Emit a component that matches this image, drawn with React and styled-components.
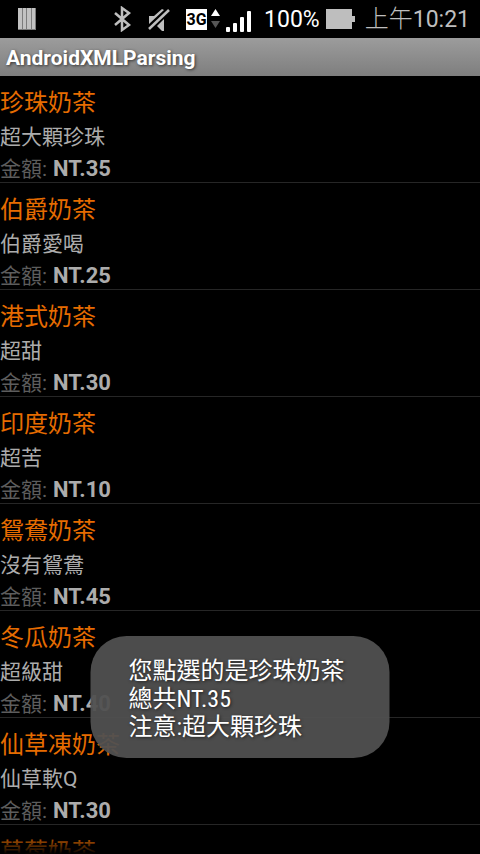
import React from "react";
import styled, { createGlobalStyle } from "styled-components";

const drinks = [
  { name: "珍珠奶茶", note: "超大顆珍珠", price: 35 },
  { name: "伯爵奶茶", note: "伯爵愛喝", price: 25 },
  { name: "港式奶茶", note: "超甜", price: 30 },
  { name: "印度奶茶", note: "超苦", price: 10 },
  { name: "鴛鴦奶茶", note: "沒有鴛鴦", price: 45 },
  { name: "冬瓜奶茶", note: "超級甜", price: 40 },
  { name: "仙草凍奶茶", note: "仙草軟Q", price: 30 },
  { name: "草莓奶茶" },
];

function StatusBar() {
  return (
    <Status>
      <svg width="18" height="22" viewBox="0 0 18 22">
        <rect width="18" height="22" fill="#7c7c7c" />
        <path d="M0 0h4v21H0zM5 0h3v21H5zM9 0h4v21H9zM14 0h3v21h-3z" fill="#c2c2c2" />
      </svg>
      <StatusIcons>
        <svg width="18" height="26" viewBox="0 0 18 26" aria-label="Bluetooth">
          <path
            d="M1 7l14 12-7 5V2l7 5L1 19"
            fill="none"
            stroke="#bebebe"
            strokeWidth="2.5"
          />
        </svg>
        <Mute width="22" height="24" viewBox="0 0 22 24" aria-label="Muted">
          <path d="M1 9h5l8-7 2 1L1 17z" fill="#bebebe" />
          <path d="M16 12v12h-2l-5-5z" fill="#bebebe" />
          <path d="M1 22L21 3" stroke="#000" strokeWidth="5" />
          <path d="M1 22L21 3" stroke="#bebebe" strokeWidth="2.5" />
        </Mute>
        <Network>3G</Network>
        <Arrows width="9" height="20" viewBox="0 0 9 20">
          <path d="M4.5 0L9 7H0z" fill="#fff" />
          <path d="M4.5 19L9 12H0z" fill="#555" />
        </Arrows>
        <Signal width="26" height="24" viewBox="0 0 26 24" aria-label="Signal">
          <rect y="17" width="4" height="5" rx="1" fill="#fff" />
          <rect x="7" y="13" width="4" height="9" rx="1" fill="#fff" />
          <rect x="14" y="7" width="4" height="15" rx="1" fill="#fff" />
          <rect x="21" y="1" width="4" height="21" rx="1" fill="#fff" />
        </Signal>
        <Percent>100%</Percent>
        <svg width="29" height="20" viewBox="0 0 29 20" aria-label="Battery">
          <path d="M0 0h26v7h3v6h-3v7H0z" fill="#bebebe" />
        </svg>
        <Clock>
          上午<span>10:21</span>
        </Clock>
      </StatusIcons>
    </Status>
  );
}

function App() {
  return (
    <Screen>
      <GlobalStyle />
      <StatusBar />
      <TitleBar>AndroidXMLParsing</TitleBar>
      <List>
        {drinks.map((drink) => (
          <Item key={drink.name}>
            <h2>{drink.name}</h2>
            {drink.note && <p className="note">{drink.note}</p>}
            {drink.price && (
              <p className="price">
                <span>金額:</span>
                <strong>NT.{drink.price}</strong>
              </p>
            )}
          </Item>
        ))}
      </List>
      <Toast role="status">
        <p>您點選的是珍珠奶茶</p>
        <p>總共NT.35</p>
        <p>注意:超大顆珍珠</p>
      </Toast>
    </Screen>
  );
}

const GlobalStyle = createGlobalStyle`
  * {
    box-sizing: border-box;
    margin: 0;
    padding: 0;
  }

  body {
    background: #000;
    font-family: Roboto, "Noto Sans CJK TC", sans-serif;
  }
`;

const Screen = styled.div`
  position: relative;
  display: flex;
  flex-direction: column;
  height: 100vh;
  overflow: hidden;
`;

const Status = styled.header`
  display: flex;
  justify-content: space-between;
  align-items: center;
  flex-shrink: 0;
  height: 38px;
  padding: 0 10px 0 18px;
  background: #000;
`;

const StatusIcons = styled.div`
  display: flex;
  align-items: center;
`;

const Mute = styled.svg`
  margin-left: 16px;
`;

const Network = styled.span`
  width: 21px;
  margin-left: 16px;
  background: #fff;
  color: #000;
  font-size: 16px;
  font-weight: 700;
  line-height: 21px;
  text-align: center;
`;

const Arrows = styled.svg`
  margin-left: 4px;
`;

const Signal = styled.svg`
  align-self: flex-end;
  margin-left: 6px;
`;

const Percent = styled.span`
  padding-top: 2px;
  margin: 0 6px 0 12px;
  color: #fff;
  font-size: 23px;
  line-height: 28px;
`;

const Clock = styled.time`
  margin-left: 10px;
  color: #bebebe;
  font-size: 24px;
  font-weight: 300;
  line-height: 28px;

  span {
    font-size: 23px;
    font-weight: 400;
  }
`;

const TitleBar = styled.h1`
  flex-shrink: 0;
  padding: 0 6px;
  background: linear-gradient(#9c9c9c, #7e7e7e);
  color: #fff;
  font-size: 21px;
  font-weight: 700;
  line-height: 40px;
  height: 38px;
  text-shadow: 1px 1px 3px #333;
`;

const List = styled.ul`
  position: relative;
  flex: 1;
  min-height: 0;
  overflow: hidden;
  list-style: none;

  &::after {
    content: "";
    position: absolute;
    right: 0;
    bottom: 0;
    left: 0;
    height: 20px;
    background: linear-gradient(transparent, #000);
  }
`;

const Item = styled.li`
  padding-top: 9px;
  border-bottom: 1px solid #262626;

  h2 {
    color: #e66c00;
    font-size: 24px;
    font-weight: 400;
    line-height: 36px;
  }

  .note {
    color: #acacac;
    font-size: 21px;
    line-height: 32px;
  }

  .price {
    display: flex;
    gap: 6px;
    padding-top: 3px;
    font-size: 21px;
    line-height: 26px;
  }

  .price span {
    color: #5d5d5d;
  }

  .price strong {
    color: #acacac;
    font-size: 22px;
  }
`;

const Toast = styled.div`
  position: absolute;
  bottom: 96px;
  left: 50%;
  transform: translateX(-50%);
  padding: 21px 45px 17px 38px;
  border-radius: 36px;
  background: rgba(80, 80, 80, 0.95);
  color: #fff;
  font-family: "Roboto Condensed", "Liberation Sans Narrow", "Noto Sans CJK TC", sans-serif;
  font-size: 24px;
  line-height: 28px;
  text-shadow: 1px 1px 3px #222;
  white-space: nowrap;
`;

export default App;
